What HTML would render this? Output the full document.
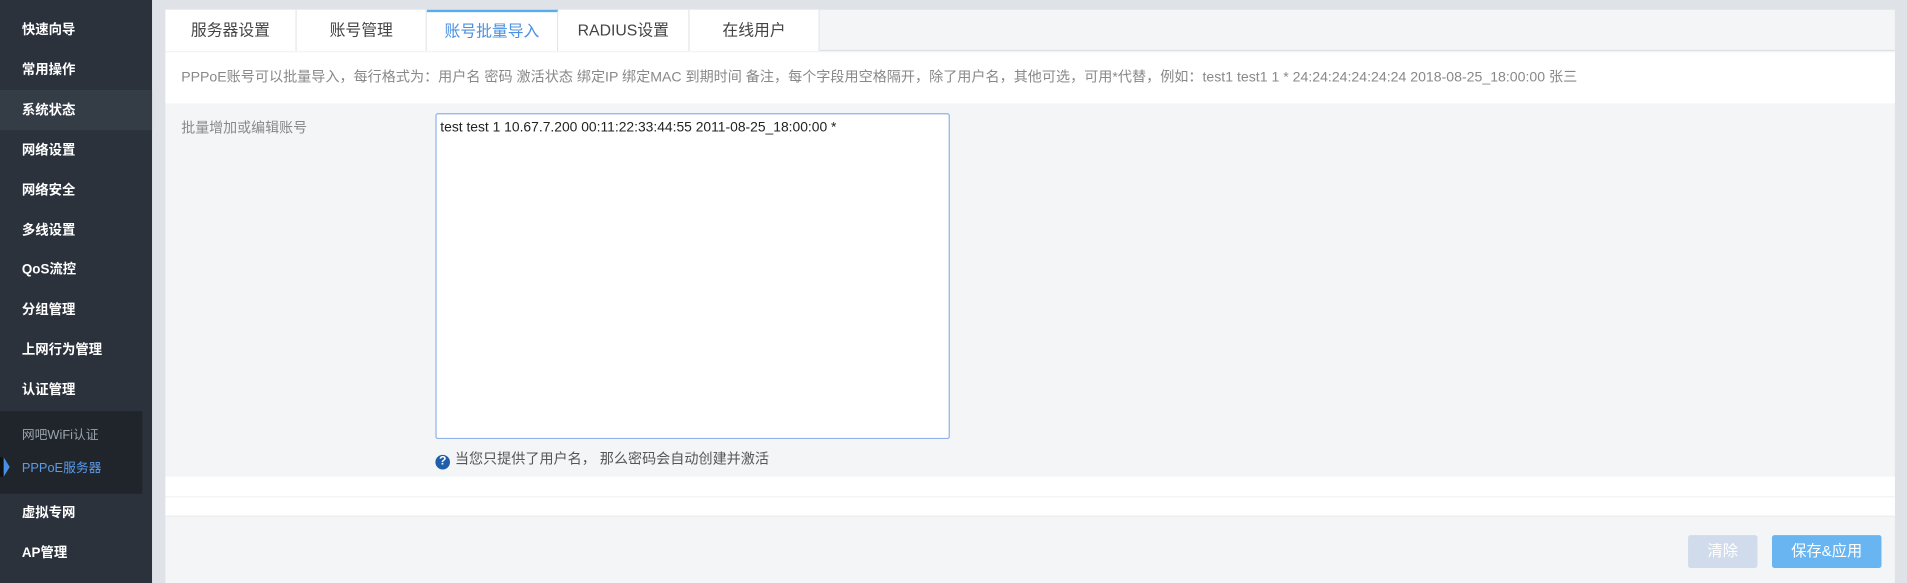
<!DOCTYPE html>
<html><head><meta charset="utf-8"><style>
*{margin:0;padding:0;box-sizing:border-box}
html,body{width:1907px;height:583px;overflow:hidden;background:#dfe2e6}
body{font-family:"Liberation Sans","Noto Sans CJK SC",sans-serif;position:relative}
.wrap{position:absolute;left:0;top:0;width:1568px;height:480px;transform:scale(1.2162);transform-origin:0 0}
.sb{position:absolute;left:0;top:0;width:125px;height:480px;background:#2b323b}
.it{position:absolute;left:18px;color:#fff;font-size:11px;font-weight:bold;line-height:16px}
.hl{position:absolute;left:0;top:74px;width:125px;height:33px;background:#343c46}
.sub{position:absolute;left:0;top:338px;width:117px;height:68px;background:#20252c}
.panel{position:absolute;left:136px;top:8px;width:1422px;height:475px;background:#f4f5f7}
.tabs{position:absolute;left:0;top:0;height:34px;width:1422px;border-bottom:1px solid #dde0e4}
.tab{position:absolute;top:0;height:34px;background:#fff;border-right:1px solid #e3e5e8;font-size:13px;color:#444;text-align:center;line-height:34px}
.tab.a{color:#4a90e2;border-top:2px solid #5aacef;line-height:31px}
.info{position:absolute;left:0;top:35px;width:1422px;height:42px;background:#fff;font-size:11.6px;color:#888;line-height:42px;padding-left:13px;white-space:nowrap}
.lbl{position:absolute;left:13px;top:89px;font-size:11.5px;color:#888}
.ta{position:absolute;left:222px;top:85px;width:423px;height:268px;background:#fff;border:1px solid #8fb3ea;border-radius:2px;font-size:11.4px;color:#222;padding:5px 3px}
.hint{position:absolute;left:222px;top:363px;font-size:11.6px;color:#555;line-height:14px}
.q{display:inline-block;width:12px;height:12px;border-radius:50%;background:#1f5ea8;color:#fff;font-size:10px;font-weight:bold;text-align:center;line-height:12px;margin-right:4px;vertical-align:-1px}
.w1{position:absolute;left:0;top:384px;width:1422px;height:17px;background:#fff;border-bottom:1px solid #f0f1f3}
.w2{position:absolute;left:0;top:401px;width:1422px;height:16px;background:#fff;border-bottom:1px solid #ebecef}
.btn{position:absolute;top:432px;height:27px;border-radius:2px;color:#fff;font-size:12.5px;text-align:center;line-height:27px}
</style></head><body>
<div class="wrap">
<div class="sb">
<div class="hl"></div>
<div class="sub"></div>
<div style="position:absolute;left:0;top:376px;width:3px;height:16px;background:#111"></div>
<div style="position:absolute;left:3px;top:376px;width:0;height:0;border-top:8px solid transparent;border-bottom:8px solid transparent;border-left:5px solid #4a90e2"></div>
<div class="it" style="top:17px">快速向导</div>
<div class="it" style="top:50px">常用操作</div>
<div class="it" style="top:83px">系统状态</div>
<div class="it" style="top:116px">网络设置</div>
<div class="it" style="top:149px">网络安全</div>
<div class="it" style="top:182px">多线设置</div>
<div class="it" style="top:214px">QoS流控</div>
<div class="it" style="top:247px">分组管理</div>
<div class="it" style="top:280px">上网行为管理</div>
<div class="it" style="top:313px">认证管理</div>
<div class="it" style="top:350px;left:18px;font-weight:normal;font-size:10.5px;color:#9aa3ad">网吧WiFi认证</div>
<div class="it" style="top:377px;left:18px;font-weight:normal;font-size:10.5px;color:#5b9be8">PPPoE服务器</div>
<div class="it" style="top:414px">虚拟专网</div>
<div class="it" style="top:447px">AP管理</div>
</div>
<div class="panel">
<div class="tabs">
<div class="tab" style="left:0;width:108px">服务器设置</div>
<div class="tab" style="left:108px;width:107px">账号管理</div>
<div class="tab a" style="left:215px;width:108px">账号批量导入</div>
<div class="tab" style="left:323px;width:108px">RADIUS设置</div>
<div class="tab" style="left:431px;width:107px">在线用户</div>
</div>
<div class="info">PPPoE账号可以批量导入，每行格式为：用户名 密码 激活状态 绑定IP 绑定MAC 到期时间 备注，每个字段用空格隔开，除了用户名，其他可选，可用*代替，例如：test1 test1 1 * 24:24:24:24:24:24 2018-08-25_18:00:00 张三</div>
<div class="lbl">批量增加或编辑账号</div>
<div class="ta">test test 1 10.67.7.200 00:11:22:33:44:55 2011-08-25_18:00:00 *</div>
<div class="hint"><span class="q">?</span>当您只提供了用户名， 那么密码会自动创建并激活</div>
<div class="w1"></div><div class="w2"></div>
<div class="btn" style="left:1252px;width:57px;background:#d0dcec">清除</div>
<div class="btn" style="left:1321px;width:90px;background:#68b5f1">保存&amp;应用</div>
</div>
</div>
</body></html>
